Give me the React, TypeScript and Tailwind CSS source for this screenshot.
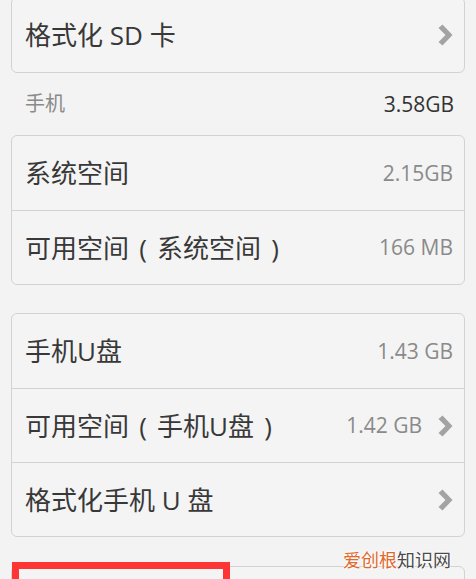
import React from 'react';

type Row = { label: React.ReactNode; key: string; value?: string; chevron?: boolean };

const Chevron: React.FC = () => (
  <svg width="15" height="22" viewBox="0 0 15 22" className="shrink-0">
    <polygon points="0.5,4 4.5,0.5 14.5,11 4.5,21.5 0.5,18 7.5,11" fill="#a3a3a3" />
  </svg>
);

// wide paren like the reference ( glyph centred in a ~28px box )
const P: React.FC<{ c: string }> = ({ c }) => (
  <span className="inline-block w-[28px] text-center">{c}</span>
);

const Card: React.FC<{ rows: Row[]; className?: string }> = ({ rows, className }) => (
  <div className={`rounded-[6px] border border-[#d2d2d2] bg-[#f4f4f4] ${className ?? ''}`}>
    {rows.map((row, i) => (
      <div
        key={row.key}
        className={`flex h-[74px] items-center pl-[13px] pr-[11px] ${i > 0 ? 'border-t border-[#d2d2d2]' : ''}`}
      >
        <span className="flex-1 text-[26px] leading-none text-[#383838]">{row.label}</span>
        {row.value && <span className="text-[21px] leading-none text-[#8a8a8a]">{row.value}</span>}
        {row.chevron && (
          <span className={`flex ${row.value ? 'ml-[16px]' : ''}`}>
            <Chevron />
          </span>
        )}
      </div>
    ))}
  </div>
);

const App: React.FC = () => {
  return (
    <div
      className="relative h-[579px] w-[476px] overflow-hidden bg-[#f3f3f3] px-[11px]"
      style={{ fontFamily: '"Open Sans", "Noto Sans CJK SC", sans-serif' }}
    >
      <Card className="-mt-[3px]" rows={[{ key: 'sd', label: '格式化 SD 卡', chevron: true }]} />

      <div className="flex h-[62px] items-center pl-[14px] pr-[11px]">
        <span className="flex-1 text-[20px] leading-none text-[#8a8a8a]">手机</span>
        <span className="text-[21px] leading-none text-[#333333]">3.58GB</span>
      </div>

      <Card
        rows={[
          { key: 'sys', label: '系统空间', value: '2.15GB' },
          {
            key: 'sysfree',
            label: (
              <>
                可用空间<P c="(" />系统空间<P c=")" />
              </>
            ),
            value: '166 MB',
          },
        ]}
      />

      <Card
        className="mt-[28px]"
        rows={[
          { key: 'u', label: '手机U盘', value: '1.43 GB' },
          {
            key: 'ufree',
            label: (
              <>
                可用空间<P c="(" />手机U盘<P c=")" />
              </>
            ),
            value: '1.42 GB',
            chevron: true,
          },
          { key: 'ufmt', label: '格式化手机 U 盘', chevron: true },
        ]}
      />

      <Card className="mt-[29px]" rows={[{ key: 'next', label: '' }]} />

      {/* highlight box */}
      <div className="absolute left-[12px] top-[562px] h-[40px] w-[218px] border-[7px] border-[#fe3535]" />

      {/* watermark */}
      <div
        className="absolute left-[343px] top-[550px] text-[18px] leading-[20px]"
        style={{ textShadow: '0 0 2px #fff, 0 0 2px #fff, 0 0 3px #fff' }}
      >
        <span className="text-[#e0682c]">爱创根</span>
        <span className="text-[#4a4a4a]">知识网</span>
      </div>
    </div>
  );
};

export default App;
